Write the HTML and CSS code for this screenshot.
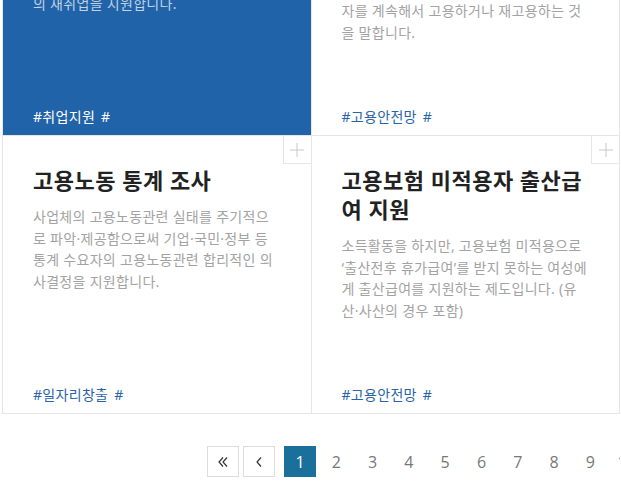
FILE: index.html
```html
<!DOCTYPE html>
<html lang="ko">
<head>
    <meta charset="UTF-8">
    <meta name="viewport" content="width=device-width, initial-scale=1.0">
    <title>고용노동 정책 목록</title>
    <link rel="stylesheet" href="styles.css">
</head>
<body>

    <div class="page">
        <ul class="card-list">
            <li class="card card-active">
                <button class="card-more" type="button" aria-label="더보기">
                    <svg width="14" height="14" viewBox="0 0 14 14"><path d="M7 0v14M0 7h14" stroke="currentColor" stroke-width="1"/></svg>
                </button>
                <h3 class="card-title">중장년 재취업 지원</h3>
                <p class="card-desc">퇴직하였거나 퇴직 예정인 중장년 구직자에게 생애경력설계와 전직지원 서비스를 제공하여 전문적인 상담을 통해 중장년층의 재취업을 지원합니다.</p>
                <div class="card-tags"><a href="#">#취업지원</a><a href="#">#</a></div>
            </li>
            <li class="card">
                <button class="card-more" type="button" aria-label="더보기">
                    <svg width="14" height="14" viewBox="0 0 14 14"><path d="M7 0v14M0 7h14" stroke="currentColor" stroke-width="1"/></svg>
                </button>
                <h3 class="card-title">고령자 계속고용 장려금 지원</h3>
                <p class="card-desc">계속고용제도란 사업주가 고령자에 대해 정년퇴직 제도가 없이 정년에 도달한 근로자를 계속해서 고용하거나 재고용하는 것을 말합니다.</p>
                <div class="card-tags"><a href="#">#고용안전망</a><a href="#">#</a></div>
            </li>
            <li class="card">
                <button class="card-more" type="button" aria-label="더보기">
                    <svg width="14" height="14" viewBox="0 0 14 14"><path d="M7 0v14M0 7h14" stroke="currentColor" stroke-width="1"/></svg>
                </button>
                <h3 class="card-title">고용노동 통계 조사</h3>
                <p class="card-desc">사업체의 고용노동관련 실태를 주기적으로 파악·제공함으로써 기업·국민·정부 등 통계 수요자의 고용노동관련 합리적인 의사결정을 지원합니다.</p>
                <div class="card-tags"><a href="#">#일자리창출</a><a href="#">#</a></div>
            </li>
            <li class="card">
                <button class="card-more" type="button" aria-label="더보기">
                    <svg width="14" height="14" viewBox="0 0 14 14"><path d="M7 0v14M0 7h14" stroke="currentColor" stroke-width="1"/></svg>
                </button>
                <h3 class="card-title">고용보험 미적용자 출산급여 지원</h3>
                <p class="card-desc">소득활동을 하지만, 고용보험 미적용으로 ‘출산전후 휴가급여’를 받지 못하는 여성에게 출산급여를 지원하는 제도입니다. (유산·사산의 경우 포함)</p>
                <div class="card-tags"><a href="#">#고용안전망</a><a href="#">#</a></div>
            </li>
        </ul>

        <div class="paging">
            <a href="#" class="paging-btn" aria-label="처음">
                <svg width="12" height="12" viewBox="0 0 12 12"><path d="M6 1.5L2 6l4 4.5M10 1.5L6 6l4 4.5" fill="none" stroke="#333" stroke-width="1.2"/></svg>
            </a>
            <a href="#" class="paging-btn" aria-label="이전">
                <svg width="12" height="12" viewBox="0 0 12 12"><path d="M8 1.5L4 6l4 4.5" fill="none" stroke="#333" stroke-width="1.2"/></svg>
            </a>
            <div class="paging-nums">
                <a href="#" class="on">1</a>
                <a href="#">2</a>
                <a href="#">3</a>
                <a href="#">4</a>
                <a href="#">5</a>
                <a href="#">6</a>
                <a href="#">7</a>
                <a href="#">8</a>
                <a href="#">9</a>
                <a href="#">10</a>
            </div>
            <a href="#" class="paging-btn" aria-label="다음">
                <svg width="12" height="12" viewBox="0 0 12 12"><path d="M4 1.5L8 6l-4 4.5" fill="none" stroke="#333" stroke-width="1.2"/></svg>
            </a>
        </div>
    </div>

</body>
</html>
```

FILE: styles.css
```css
body {
    margin: 0;
    background-color: #fff;
    font-family: "Noto Sans", "Noto Sans CJK KR", sans-serif;
    overflow: hidden;
}

.page {
    margin: -143px 1px 0 2px;
}

.card-list {
    list-style: none;
    margin: 0;
    padding: 0;
    display: grid;
    grid-template-columns: 1fr 1fr;
    border-top: 1px solid #e6e6e6;
    border-left: 1px solid #e6e6e6;
}

.card {
    position: relative;
    height: 278px;
    box-sizing: border-box;
    padding: 30px 30px 8px;
    border-right: 1px solid #e6e6e6;
    border-bottom: 1px solid #e6e6e6;
    background-color: #fff;
    display: flex;
    flex-direction: column;
}

.card-active {
    background-color: #2163a8;
}

.card-more {
    position: absolute;
    top: 0;
    right: 0;
    width: 28px;
    height: 28px;
    padding: 0;
    border: none;
    border-left: 1px solid #e6e6e6;
    border-bottom: 1px solid #e6e6e6;
    background: #fff;
    color: #c8c8c8;
    display: flex;
    align-items: center;
    justify-content: center;
    cursor: pointer;
}

.card-title {
    margin: 0;
    font-size: 22px;
    line-height: 29px;
    letter-spacing: 0.5px;
    font-weight: 700;
    color: #222;
}

.card-desc {
    margin: 11px 0 0;
    font-size: 14px;
    line-height: 21.5px;
    letter-spacing: 0.3px;
    color: #a3a3a3;
}

.card-active .card-title {
    color: #fff;
}

.card-active .card-desc {
    color: rgba(255, 255, 255, 0.72);
}

.card-tags {
    margin-top: auto;
    display: flex;
    gap: 6px;
    font-size: 14px;
    line-height: 20px;
    letter-spacing: 0.3px;
}

.card-tags a {
    color: #2a64a8;
    text-decoration: none;
}

.card-active .card-tags a {
    color: #fff;
}

.paging {
    margin-top: 32px;
    padding-left: 205px;
    display: flex;
    align-items: center;
    white-space: nowrap;
    overflow: hidden;
}

.paging-btn {
    flex-shrink: 0;
    width: 30px;
    height: 29px;
    border: 1px solid #dcdcdc;
    display: flex;
    align-items: center;
    justify-content: center;
    margin-right: 4px;
    background: #fff;
}

.paging-nums {
    flex-shrink: 0;
    display: flex;
    gap: 4.3px;
    margin-left: 5px;
    margin-right: 4px;
}

.paging-nums a {
    flex-shrink: 0;
    width: 32px;
    height: 31px;
    display: flex;
    align-items: center;
    justify-content: center;
    font-family: "Open Sans", sans-serif;
    font-size: 16px;
    color: #777;
    text-decoration: none;
}

.paging-nums a.on {
    background-color: #1b6f9b;
    color: #fff;
}
```
